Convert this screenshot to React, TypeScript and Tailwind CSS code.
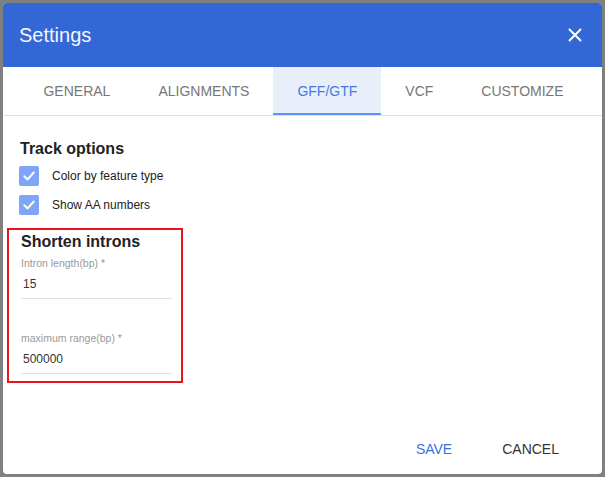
import React, { useState } from 'react';

const tabs = ['General', 'Alignments', 'GFF/GTF', 'VCF', 'Customize'];

function CheckRow({ label, checked, onToggle }: { label: string; checked: boolean; onToggle: () => void }) {
  return (
    <div className="h-[29px] flex items-center gap-[13px] cursor-pointer" onClick={onToggle}>
      <div className={checked ? 'w-[20px] h-[20px] rounded-[2px] bg-[#7fa6f6] flex items-center justify-center' : 'w-[20px] h-[20px] rounded-[2px] border-2 border-[#9e9e9e]'}>
        {checked && (
          <svg width="14" height="14" viewBox="0 0 14 14" fill="none">
            <path d="M2.3 7.3 L5.6 10.4 L11.8 3.5" stroke="white" strokeWidth="2" strokeLinecap="round" strokeLinejoin="round" />
          </svg>
        )}
      </div>
      <span className="text-[12px] text-[#222]">{label}</span>
    </div>
  );
}

function Field({ label, value }: { label: string; value: string }) {
  return (
    <div className="w-[151px]">
      <div className="text-[10.5px] leading-[14px] text-[#9a9a9a]">{label}</div>
      <div className="mt-[6px] pl-[2px] pb-[6px] text-[12px] leading-[16px] text-[#333] border-b border-[#e0e0e0]">{value}</div>
    </div>
  );
}

export default function App() {
  const [active, setActive] = useState(2);
  const [colorByType, setColorByType] = useState(true);
  const [showAA, setShowAA] = useState(true);

  return (
    <div className="w-[605px] h-[477px] bg-[#808080] p-[3px] font-['Liberation_Sans',Arial,sans-serif]">
      <div className="w-[599px] h-[471px] bg-white rounded-[4px] overflow-hidden flex flex-col">
        <div className="h-[64px] shrink-0 bg-[#3367d6] flex items-center justify-between pl-[16px] pr-[20px]">
          <h1 className="text-[20px] text-[#f4f6fc]">Settings</h1>
          <button className="w-[14px] h-[14px]">
            <svg width="14" height="14" viewBox="0 0 14 14" fill="none">
              <path d="M1 1 L13 13 M13 1 L1 13" stroke="white" strokeWidth="2" />
            </svg>
          </button>
        </div>

        <div className="h-[49px] shrink-0 flex justify-center pl-[2px] border-b border-[#e0e0e0]">
          {tabs.map((t, i) => (
            <button
              key={t}
              onClick={() => setActive(i)}
              className={
                i === active
                  ? 'px-[24px] h-[48px] uppercase text-[14px] text-[#4479e3] bg-[#e8effb] border-b-2 border-[#5b95f9] pt-[2px]'
                  : 'px-[24px] h-[48px] uppercase text-[14px] text-[#777]'
              }
            >
              {t}
            </button>
          ))}
        </div>

        <div className="flex-1 px-[16px] pt-[23px]">
          <h2 className="text-[16px] leading-[20px] font-bold text-[#222] pl-[1px]">Track options</h2>
          <div className="mt-[2px]">
            <CheckRow label="Color by feature type" checked={colorByType} onToggle={() => setColorByType(!colorByType)} />
            <CheckRow label="Show AA numbers" checked={showAA} onToggle={() => setShowAA(!showAA)} />
          </div>

          <div className="mt-[9px] -ml-[12px] w-[176px] border-2 border-[#e8161b] pl-[12px] pt-[2px] pb-[7px]">
            <h2 className="text-[16px] leading-[20px] font-bold text-[#222]">Shorten introns</h2>
            <div className="mt-[4px]">
              <Field label="Intron length(bp) *" value="15" />
            </div>
            <div className="mt-[32px]">
              <Field label="maximum range(bp) *" value="500000" />
            </div>
          </div>
        </div>

        <div className="h-[36px] mb-[7px] shrink-0 flex items-center justify-end gap-[18px] pr-[27px]">
          <button className="px-[16px] h-[36px] uppercase text-[14px] text-[#3a70dc]">Save</button>
          <button className="px-[16px] h-[36px] uppercase text-[14px] text-[#333]">Cancel</button>
        </div>
      </div>
    </div>
  );
}
